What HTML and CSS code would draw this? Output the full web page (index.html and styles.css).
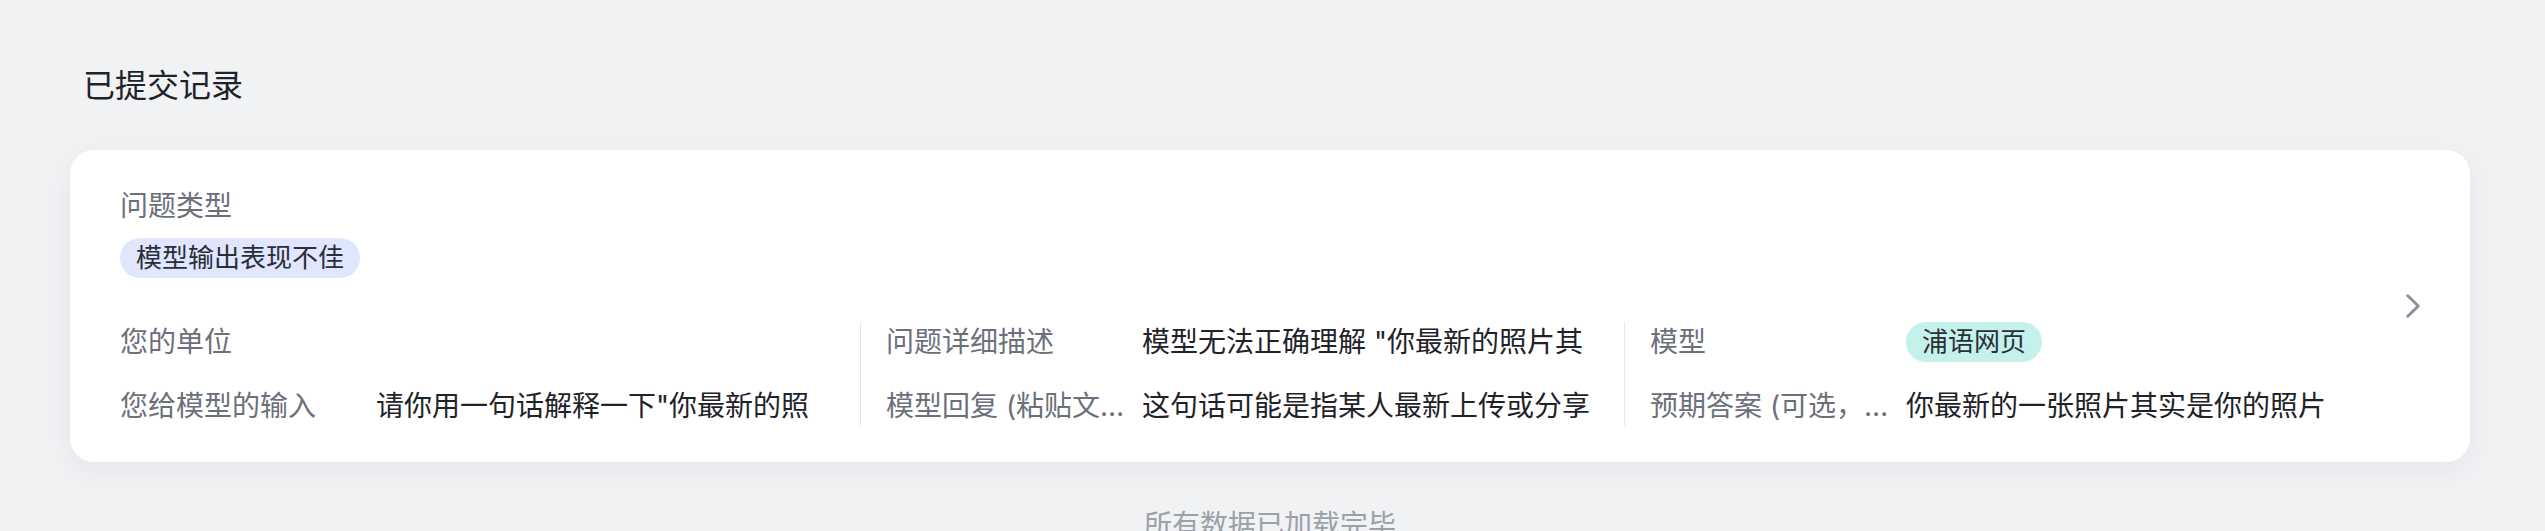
FILE: index.html
```html
<!DOCTYPE html>
<html lang="zh-CN">
<head>
<meta charset="utf-8">
<title>已提交记录</title>
<link rel="stylesheet" href="styles.css">
</head>
<body>
<main class="page">
  <h1 class="page-title">已提交记录</h1>

  <section class="record-card">
    <div class="record-main">
      <div class="record-type">
        <div class="label">问题类型</div>
        <span class="tag tag-blue">模型输出表现不佳</span>
      </div>

      <div class="record-grid">
        <div class="record-col col-first">
          <div class="field">
            <div class="label field-label">您的单位</div>
            <div class="field-value"></div>
          </div>
          <div class="field">
            <div class="label field-label">您给模型的输入</div>
            <div class="field-value">请你用一句话解释一下"你最新的照片其实是你的照片"</div>
          </div>
        </div>

        <div class="record-col">
          <div class="field">
            <div class="label field-label">问题详细描述</div>
            <div class="field-value">模型无法正确理解 "你最新的照片其实是你的照片" 这句话的含义</div>
          </div>
          <div class="field">
            <div class="label field-label">模型回复 (粘贴文本)</div>
            <div class="field-value">这句话可能是指某人最新上传或分享的照片实际上是他本人的照片</div>
          </div>
        </div>

        <div class="record-col">
          <div class="field">
            <div class="label field-label">模型</div>
            <div class="field-value field-tag"><span class="tag tag-teal">浦语网页</span></div>
          </div>
          <div class="field">
            <div class="label field-label">预期答案 (可选，建议填写)</div>
            <div class="field-value">你最新的一张照片其实是你的照片</div>
          </div>
        </div>
      </div>
    </div>

    <div class="record-arrow" aria-hidden="true">
      <svg width="14" height="24" viewBox="0 0 14 24">
        <polyline points="1.8,1.8 12.2,12 1.8,22.2" fill="none" stroke="#8a909c" stroke-width="3" stroke-linecap="round" stroke-linejoin="round"/>
      </svg>
    </div>
  </section>

  <p class="list-end">所有数据已加载完毕</p>
</main>
</body>
</html>
```

FILE: styles.css
```css
* {
  box-sizing: border-box;
}

html, body {
  margin: 0;
  padding: 0;
}

body {
  background: #f1f2f4;
  font-family: "Inter", "Noto Sans CJK SC", "Noto Sans", sans-serif;
  color: #1f2329;
}

.page {
  display: flex;
  flex-direction: column;
  padding: 64px 75px 0 70px;
}

.page-title {
  margin: 0 0 42px 0;
  padding-left: 13px;
  font-size: 32px;
  line-height: 44px;
  font-weight: 400;
  color: #1f2329;
}

.record-card {
  display: flex;
  align-items: center;
  gap: 18px;
  background: #ffffff;
  border-radius: 24px;
  padding: 36px 50px;
  box-shadow: 0 8px 30px rgba(30, 40, 60, 0.06);
}

.record-main {
  flex: 1;
  min-width: 0;
  display: flex;
  flex-direction: column;
}

.label {
  font-size: 28px;
  line-height: 40px;
  color: #6b707a;
}

.record-type {
  display: flex;
  flex-direction: column;
  align-items: flex-start;
  gap: 12px;
}

.tag {
  display: inline-block;
  height: 40px;
  line-height: 40px;
  padding: 0 16px;
  border-radius: 20px;
  font-size: 26px;
  color: #2a2f37;
  white-space: nowrap;
}

.tag-blue {
  background: #dfe6fd;
}

.tag-teal {
  background: #c4f1eb;
}

.record-grid {
  margin-top: 44px;
  display: grid;
  grid-template-columns: minmax(0, 740fr) minmax(0, 764fr) minmax(0, 764fr);
}

.record-col {
  display: flex;
  flex-direction: column;
  gap: 24px;
  padding: 0 30px 0 25px;
  border-left: 1px solid #e6e7eb;
}

.record-col.col-first {
  padding-left: 0;
  border-left: none;
}

.field {
  display: flex;
  align-items: flex-start;
  gap: 16px;
  height: 40px;
}

.field-label {
  flex: 0 0 240px;
  width: 240px;
  white-space: nowrap;
  overflow: hidden;
  text-overflow: ellipsis;
}

.field-value {
  flex: 1;
  min-width: 0;
  height: 40px;
  overflow: hidden;
  font-size: 28px;
  line-height: 40px;
  color: #1f2329;
  word-break: break-all;
}

.field-tag {
  display: flex;
  align-items: center;
}

.record-arrow {
  flex: 0 0 14px;
  display: flex;
  align-items: center;
  height: 24px;
}

.record-arrow svg {
  display: block;
}

.list-end {
  margin: 43px 0 0 0;
  text-align: center;
  font-size: 28px;
  line-height: 40px;
  color: #9ba0a9;
}
```
